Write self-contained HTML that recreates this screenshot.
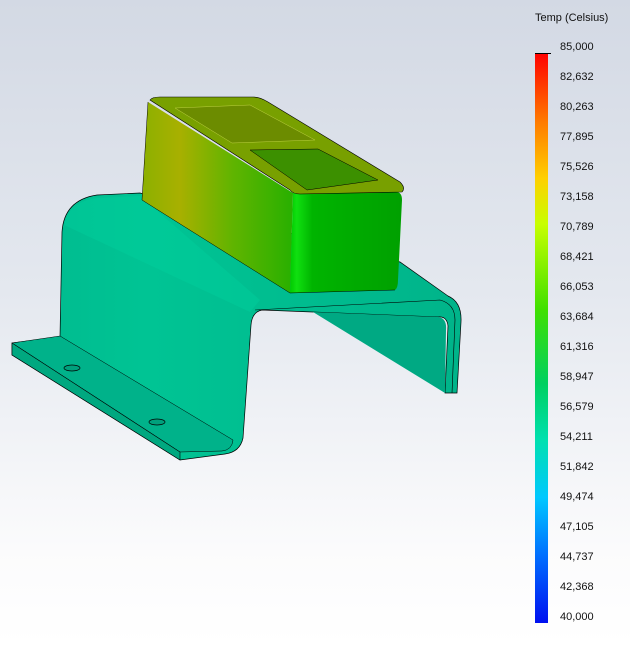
<!DOCTYPE html>
<html><head><meta charset="utf-8"><style>
html,body{margin:0;padding:0}
body{width:630px;height:645px;overflow:hidden;background:linear-gradient(180deg,#d3d9e4 0%,#e4e8ef 45%,#fbfbfc 85%,#fff 100%);position:relative;font-family:"Liberation Sans",sans-serif}
.t{position:absolute;left:535px;top:12px;font-size:11px;color:#111}
.bar{position:absolute;left:535px;top:53px;width:13px;height:570px;background:linear-gradient(180deg,#ff0000 0%,#ff7a00 12%,#ffd000 22%,#c8ff00 30%,#40e000 45%,#00d060 58%,#00e0b0 68%,#00c8ff 78%,#0070ff 88%,#0010f0 100%)}
.l{position:absolute;left:560px;font-size:11px;color:#111}
.k{position:absolute;left:548px;width:3px;height:1px;background:#000}
</style></head><body>
<svg width="630" height="645" style="position:absolute;left:0;top:0">
<defs>
<linearGradient id="wall" x1="0" y1="0" x2="1" y2="0">
<stop offset="0" stop-color="#00b98e"/><stop offset="0.3" stop-color="#00c494"/><stop offset="1" stop-color="#00b48a"/></linearGradient>
<linearGradient id="front" x1="0" y1="0" x2="1" y2="0">
<stop offset="0" stop-color="#8cb000"/><stop offset="0.25" stop-color="#a8b000"/><stop offset="0.6" stop-color="#60b400"/><stop offset="1" stop-color="#28b000"/></linearGradient>
<linearGradient id="side" x1="0" y1="0" x2="1" y2="0">
<stop offset="0" stop-color="#00c800"/><stop offset="0.06" stop-color="#10e010"/><stop offset="0.2" stop-color="#00b400"/><stop offset="1" stop-color="#00a000"/></linearGradient>
</defs>
<path d="M12,343 L60,337 L62,232 Q64,200 97,195 L140,193 L400,262 L448,296 Q462,302 461,322 L457,393 L445,393 L448,326 Q447,316 438,317 L262,310 Q252,312 251,325 L243,438 Q240,452 225,454 L180,460 L12,355 Z" fill="url(#wall)" stroke="#000" stroke-width="0.7"/>
<path d="M313,312 L438,317 Q447,318 446,330 L445,393 Z" fill="#00a983"/>
<path d="M12,343 L60,336 L233,440 Q232,450 222,451 L180,452 Z" fill="#00b28a" stroke="#000" stroke-width="0.5"/>
<path d="M12,343 L180,452 L180,460 L12,355 Z" fill="#00a880" stroke="#000" stroke-width="0.6"/>
<path d="M64,225 Q68,202 97,198 L140,196 L260,300 L250,312 Z" fill="#00d4a0" opacity="0.35"/>
<path d="M255,310 L440,300 Q455,304 455,320 L452,393" fill="none" stroke="#000" stroke-width="0.6"/>
<ellipse cx="72" cy="368" rx="8" ry="3" fill="#00a07c" stroke="#000" stroke-width="0.7"/>
<ellipse cx="157" cy="422" rx="8" ry="3" fill="#00a07c" stroke="#000" stroke-width="0.7"/>
<path d="M148,102 L142,200 L290,293 L293,193 Z" fill="url(#front)"/>
<path d="M293,193 L290,293 L395,290 Q398,288 398,280 L402,200 Q402,192 396,192 Z" fill="url(#side)"/>
<path d="M150,100 Q152,97 160,97 L253,97 Q260,97 268,102 L400,182 Q406,188 402,192 L300,194 Q293,194 290,190 Z" fill="#78a000" stroke="#000" stroke-width="0.6"/>
<path d="M175,108 L250,105 L315,140 L232,143 Z" fill="#6c8c00" stroke="#bcd040" stroke-width="0.5"/>
<path d="M250,150 L318,149 L378,180 L307,190 Z" fill="#3c9000" stroke="#000" stroke-width="0.5"/>
<path d="M148,102 L142,200 L290,293 L395,290" fill="none" stroke="#000" stroke-width="0.5"/>
</svg>
<div class="t">Temp (Celsius)</div>
<div class="bar"></div>
<div class="k" style="top:53px;left:535px;width:16px"></div>
<div class="l" style="top:41px">85,000</div>
<div class="l" style="top:71px">82,632</div>
<div class="l" style="top:101px">80,263</div>
<div class="l" style="top:131px">77,895</div>
<div class="l" style="top:161px">75,526</div>
<div class="l" style="top:191px">73,158</div>
<div class="l" style="top:221px">70,789</div>
<div class="l" style="top:251px">68,421</div>
<div class="l" style="top:281px">66,053</div>
<div class="l" style="top:311px">63,684</div>
<div class="l" style="top:341px">61,316</div>
<div class="l" style="top:371px">58,947</div>
<div class="l" style="top:401px">56,579</div>
<div class="l" style="top:431px">54,211</div>
<div class="l" style="top:461px">51,842</div>
<div class="l" style="top:491px">49,474</div>
<div class="l" style="top:521px">47,105</div>
<div class="l" style="top:551px">44,737</div>
<div class="l" style="top:581px">42,368</div>
<div class="l" style="top:611px">40,000</div>
</body></html>
